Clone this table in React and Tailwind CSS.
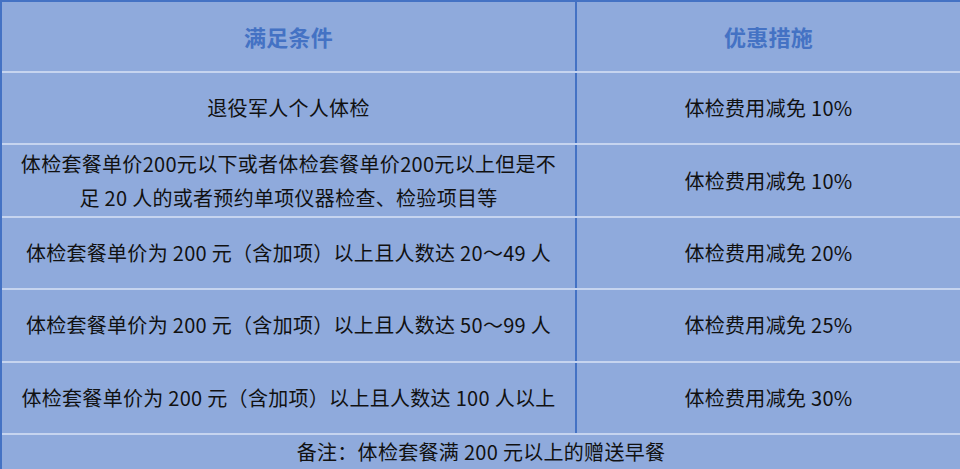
import React from "react";

const rows = [
  { cond: ["退役军人个人体检"], offer: "体检费用减免 10%" },
  {
    cond: ["体检套餐单价200元以下或者体检套餐单价200元以上但是不", "足 20 人的或者预约单项仪器检查、检验项目等"],
    offer: "体检费用减免 10%",
  },
  { cond: ["体检套餐单价为 200 元（含加项）以上且人数达 20～49 人"], offer: "体检费用减免 20%" },
  { cond: ["体检套餐单价为 200 元（含加项）以上且人数达 50～99 人"], offer: "体检费用减免 25%" },
  { cond: ["体检套餐单价为 200 元（含加项）以上且人数达 100 人以上"], offer: "体检费用减免 30%" },
];

const App = () => {
  return (
    <div
      className="w-[960px] h-[469px] overflow-hidden bg-[#8faadc] border-t-2 border-l-2 border-[#4472c4] text-[#111] text-[20px] tracking-[0.3px]"
      style={{ fontFamily: '"Noto Sans CJK SC", "Noto Sans", sans-serif' }}
    >
      <div className="flex h-[71px] border-b-2 border-[#c6d4ef]">
        <div className="w-[573px] flex items-center justify-center font-bold text-[22px] text-[#4472c4]">
          满足条件
        </div>
        <div className="w-[2px] bg-[#4472c4]" />
        <div className="flex-1 flex items-center justify-center font-bold text-[22px] text-[#4472c4]">
          优惠措施
        </div>
      </div>
      {rows.map((r, i) => (
        <div key={i} className="flex h-[72.4px] border-b-2 border-[#c6d4ef]">
          <div className="w-[573px] flex flex-col items-center justify-center text-center leading-[34px]">
            {r.cond.map((line, j) => (
              <span key={j} className="whitespace-nowrap">
                {line}
              </span>
            ))}
          </div>
          <div className="w-[2px] bg-[#4472c4]" />
          <div className="flex-1 flex items-center justify-center">{r.offer}</div>
        </div>
      ))}
      <div className="flex h-[60px] justify-center pt-[2px]">
        <span>备注：体检套餐满 200 元以上的赠送早餐</span>
      </div>
    </div>
  );
};

export default App;
